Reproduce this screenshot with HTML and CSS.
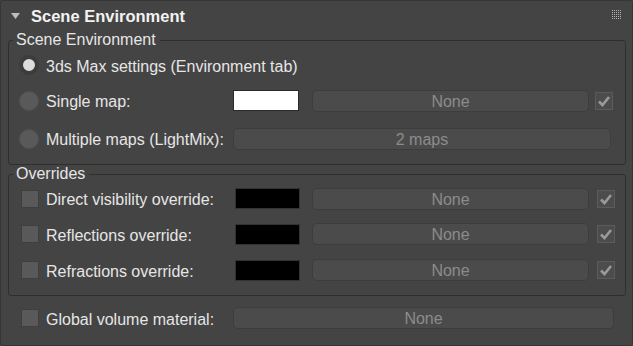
FILE: index.html
```html
<!DOCTYPE html>
<html>
<head lang="en">
<meta charset="UTF-8">
<title>Scene Environment</title>
<link rel="stylesheet" href="styles.css">
</head>
<body>
  <div class="panel">
    <div class="header">
      <svg class="caret" width="9" height="6" viewBox="0 0 9 6"><polygon points="0,0 9,0 4.5,6" fill="#bdbdbd"/></svg>
      <span class="title">Scene Environment</span>
      <svg class="grip" width="9" height="9" viewBox="0 0 9 9">
        <defs><pattern id="dots" width="2" height="2" patternUnits="userSpaceOnUse"><rect width="1" height="1" fill="#b4b4b4"/></pattern></defs>
        <rect width="9" height="9" fill="url(#dots)"/>
      </svg>
    </div>

    <fieldset class="group env">
      <legend>Scene Environment</legend>
      <div class="row">
        <span class="radio on"></span>
        <span class="lbl">3ds Max settings (Environment tab)</span>
      </div>
      <div class="row">
        <span class="radio"></span>
        <span class="lbl fixed">Single map:</span>
        <span class="swatch white"></span>
        <span class="button">None</span>
        <span class="check"><svg width="16" height="16" viewBox="0 0 16 16"><path d="M3 8.5 L6.5 12 L13 4" fill="none" stroke="#9a9a9a" stroke-width="2.6"/></svg></span>
      </div>
      <div class="row third">
        <span class="radio"></span>
        <span class="lbl fixed">Multiple maps (LightMix):</span>
        <span class="button wide">2 maps</span>
      </div>
    </fieldset>

    <fieldset class="group ovr">
      <legend>Overrides</legend>
      <div class="row">
        <span class="box"></span>
        <span class="lbl fixed">Direct visibility override:</span>
        <span class="swatch black"></span>
        <span class="button">None</span>
        <span class="check"><svg width="16" height="16" viewBox="0 0 16 16"><path d="M3 8.5 L6.5 12 L13 4" fill="none" stroke="#9a9a9a" stroke-width="2.6"/></svg></span>
      </div>
      <div class="row">
        <span class="box"></span>
        <span class="lbl fixed">Reflections override:</span>
        <span class="swatch black"></span>
        <span class="button">None</span>
        <span class="check"><svg width="16" height="16" viewBox="0 0 16 16"><path d="M3 8.5 L6.5 12 L13 4" fill="none" stroke="#9a9a9a" stroke-width="2.6"/></svg></span>
      </div>
      <div class="row">
        <span class="box"></span>
        <span class="lbl fixed">Refractions override:</span>
        <span class="swatch black"></span>
        <span class="button">None</span>
        <span class="check"><svg width="16" height="16" viewBox="0 0 16 16"><path d="M3 8.5 L6.5 12 L13 4" fill="none" stroke="#9a9a9a" stroke-width="2.6"/></svg></span>
      </div>
    </fieldset>

    <div class="row global">
      <span class="box"></span>
      <span class="lbl fixed">Global volume material:</span>
      <span class="button wide">None</span>
    </div>
  </div>
</body>
</html>
```

FILE: styles.css
```css
html, body { margin: 0; background: #444444; }
body {
font-family: "Liberation Sans", Arial, sans-serif;
font-size: 16px;
color: #e6e6e6;
}
.panel {
width: 633px;
height: 346px;
box-sizing: border-box;
border: 1px solid #363636;
border-radius: 3px;
background: #444444;
}
.header {
display: flex;
align-items: center;
height: 30px;
padding: 0 11px 0 10px;
}
.caret { margin-right: 11px; margin-top: -1px; }
.title { font-weight: bold; font-size: 16.5px; color: #f2f2f2; flex: 1; }
.grip { margin-top: -3px; }

.group {
margin: 0 6px 0 7px;
padding: 0 4px 14px 4px;
border: 1px solid #2f2f2f;
border-radius: 3px;
min-width: 0;
}
legend {
padding: 0 4px 0 3px;
line-height: 18px;
color: #e6e6e6;
}
.row {
display: flex;
align-items: center;
height: 22px;
margin-top: 13.5px;
}
.group .row:first-of-type { margin-top: 5px; }
.env .third { margin-top: 16px; }
.env { padding-bottom: 14.5px; }
.ovr .row:first-of-type { margin-top: 4.5px; }
.ovr .row { margin-top: 13.5px; }
.ovr .row:last-child { margin-top: 14px; }

.lbl { margin-top: 3px; white-space: nowrap; }
.radio {
width: 20px;
height: 20px;
box-sizing: border-box;
border-radius: 50%;
background: #595959;
border: 1px solid #505050;
margin: 0 7px 0 6px;
}
.radio.on {
background: #dcdcdc;
border: 4px solid #3c3c3c;
}
.env .fixed { width: 187px; }
.box {
width: 18px;
height: 18px;
box-sizing: border-box;
background: #595959;
border: 1px solid #3e3e3e;
margin: 0 7px 0 8px;
}
.ovr .fixed { width: 189px; }
.swatch {
height: 21px;
box-sizing: border-box;
}
.swatch.white { width: 66px; background: #ffffff; border: 1px solid #2a2a2a; margin-right: 13px; }
.swatch.black { width: 65px; background: #000000; border: 1px solid #333333; margin-right: 12px; }
.button {
flex: 1;
height: 22px;
box-sizing: border-box;
border: 1px solid #3d3d3d;
border-radius: 5px;
background: #4b4b4b;
color: #8c8c8c;
text-align: center;
line-height: 21px;
}
.check {
width: 18px;
height: 18px;
box-sizing: border-box;
border: 1px solid #5b5b5b;
background: #4c4c4c;
display: flex;
align-items: center;
justify-content: center;
}
.env .check { margin: 0 8px 0 6px; }
.ovr .check { margin: 0 6px 0 8px; }
.env .wide { margin-right: 10px; }
.global { margin: 11px 18px 0 12px; }
.global .fixed { width: 187px; }
```
